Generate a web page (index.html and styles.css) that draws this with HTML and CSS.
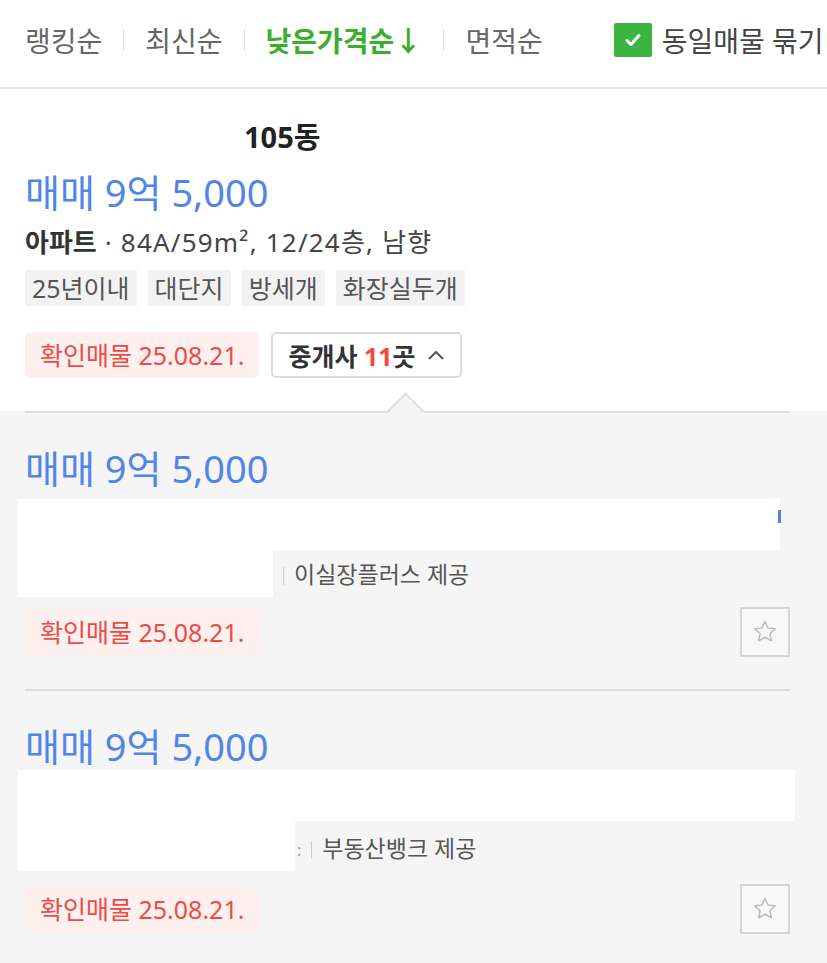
FILE: index.html
```html
<!DOCTYPE html>
<html lang="ko">

<head>
    <meta charset="UTF-8">
    <meta name="viewport" content="width=device-width, initial-scale=1.0">
    <title>매물 목록</title>

    <link rel="stylesheet" href="styles.css">
</head>

<body>
    <div class="sort-bar">
        <a href="#" class="sort-item">랭킹순</a>
        <span class="sep"></span>
        <a href="#" class="sort-item">최신순</a>
        <span class="sep"></span>
        <a href="#" class="sort-item active">낮은가격순↓</a>
        <span class="sep"></span>
        <a href="#" class="sort-item">면적순</a>
        <label class="group-check">
            <span class="checkbox">
                <svg width="22" height="22" viewBox="0 0 22 22">
                    <path d="M5 11.5l4 4 8-9" fill="none" stroke="#fff" stroke-width="3" stroke-linecap="round" stroke-linejoin="round"/>
                </svg>
            </span>
            동일매물 묶기
        </label>
    </div>

    <div class="card">
        <div class="building">105동</div>
        <div class="price">매매 9억 5,000</div>
        <div class="meta"><strong>아파트</strong> · 84A/59m², 12/24층, 남향</div>
        <div class="tags">
            <span class="tag">25년이내</span>
            <span class="tag">대단지</span>
            <span class="tag">방세개</span>
            <span class="tag">화장실두개</span>
        </div>
        <div class="actions">
            <span class="confirmed">확인매물 25.08.21.</span>
            <button class="broker-btn">
                <span>중개사 <em>11</em>곳</span>
                <svg width="18" height="12" viewBox="0 0 18 12">
                    <path d="M2 10l7-7 7 7" fill="none" stroke="#555" stroke-width="2"/>
                </svg>
            </button>
        </div>
    </div>

    <div class="brokers">
        <div class="broker">
            <div class="price">매매 9억 5,000</div>
            <div class="hidden-top"><span class="mark"></span></div>
            <div class="source-row">
                <div class="hidden-bottom"></div>
                <span class="bar"></span>
                <span class="source">이실장플러스 제공</span>
            </div>
            <div class="broker-foot">
                <span class="confirmed">확인매물 25.08.21.</span>
                <button class="star-btn">
                    <svg width="28" height="28" viewBox="0 0 24 24">
                        <path d="M12 3l2.6 5.6 6.1.7-4.5 4.2 1.2 6L12 16.5 6.6 19.5l1.2-6L3.3 9.3l6.1-.7z" fill="none" stroke="#bdbdbd" stroke-width="1.3" stroke-linejoin="round"/>
                    </svg>
                </button>
            </div>
        </div>

        <div class="broker second">
            <div class="price">매매 9억 5,000</div>
            <div class="hidden-top wide"></div>
            <div class="source-row">
                <div class="hidden-bottom wide"></div>
                <span class="colon">:</span>
                <span class="bar"></span>
                <span class="source">부동산뱅크 제공</span>
            </div>
            <div class="broker-foot">
                <span class="confirmed">확인매물 25.08.21.</span>
                <button class="star-btn">
                    <svg width="28" height="28" viewBox="0 0 24 24">
                        <path d="M12 3l2.6 5.6 6.1.7-4.5 4.2 1.2 6L12 16.5 6.6 19.5l1.2-6L3.3 9.3l6.1-.7z" fill="none" stroke="#bdbdbd" stroke-width="1.3" stroke-linejoin="round"/>
                    </svg>
                </button>
            </div>
        </div>
    </div>
</body>

</html>
```

FILE: styles.css
```css
* {
    box-sizing: border-box;
    padding: 0;
    margin: 0;
}

body {
    width: 827px;
    height: 963px;
    overflow: hidden;
    background-color: #f5f5f5;
    font-family: "Noto Sans", "Noto Sans CJK KR", sans-serif;
    color: #333;
}

a {
    text-decoration: none;
}

.sort-bar {
    display: flex;
    align-items: center;
    height: 89px;
    padding-left: 25px;
    padding-bottom: 8px;
    background-color: white;
    border-bottom: 2px solid #e6e6e6;
    white-space: nowrap;
}

.sort-item {
    font-size: 28px;
    color: #666;
}

.sort-item.active {
    color: #3aaf2e;
    font-weight: bold;
}

.sep {
    width: 1px;
    height: 20px;
    margin: 0 21px;
    background-color: #ddd;
}

.group-check {
    display: flex;
    align-items: center;
    gap: 10px;
    margin-left: 71px;
    font-size: 28px;
    color: #444;
}

.checkbox {
    display: flex;
    justify-content: center;
    align-items: center;
    width: 38px;
    height: 34px;
    border-radius: 2px;
    background-color: #3db543;
}

.card {
    padding: 28px 25px 33px;
    background-color: white;
}

.building {
    padding-left: 219px;
    font-size: 29px;
    font-weight: bold;
    line-height: 40px;
    color: #222;
}

.price {
    margin-top: 13px;
    font-size: 38px;
    line-height: 44px;
    color: #5285e8;
}

.meta {
    margin-top: 11px;
    font-size: 26px;
    line-height: 34px;
    color: #444;
    letter-spacing: 1.2px;
}

.meta strong {
    color: #333;
    letter-spacing: 0;
}

.tags {
    display: flex;
    gap: 11px;
    margin-top: 11px;
}

.tag {
    padding: 0 7px;
    background-color: #f2f2f2;
    font-size: 25px;
    line-height: 36px;
    color: #555;
}

.actions {
    display: flex;
    gap: 12px;
    margin-top: 26px;
}

.confirmed {
    display: inline-block;
    padding: 0 15px;
    border-radius: 6px;
    background-color: #fff0f0;
    font-size: 25px;
    line-height: 46px;
    color: #ef4a45;
}

.broker-btn {
    display: flex;
    align-items: center;
    gap: 11px;
    height: 46px;
    padding: 0 15px;
    border: 2px solid #ddd;
    border-radius: 5px;
    background-color: white;
    font-family: inherit;
    font-size: 25px;
    font-weight: bold;
    color: #333;
}

.broker-btn em {
    font-style: normal;
    color: #ef4a45;
}

.brokers {
    position: relative;
    padding: 0 37px 0 25px;
}

.brokers::before {
    content: "";
    position: absolute;
    top: -13px;
    left: 392px;
    width: 25px;
    height: 25px;
    background-color: #f5f5f5;
    border-top: 2px solid #ddd;
    border-left: 2px solid #ddd;
    transform: rotate(45deg);
}

.broker {
    padding-top: 35px;
    border-top: 2px solid #ddd;
}

.broker .price {
    margin-top: 0;
    line-height: 40px;
}

.hidden-top {
    position: relative;
    width: 762px;
    height: 51px;
    margin-top: 11px;
    margin-left: -7px;
    background-color: white;
}

.hidden-top.wide {
    width: 777px;
    margin-top: 4px;
}

.mark {
    position: absolute;
    right: -1px;
    top: 11px;
    width: 3px;
    height: 13px;
    background-color: #4f82e6;
}

.source-row {
    display: flex;
    align-items: flex-end;
    height: 47px;
}

.hidden-bottom {
    width: 255px;
    height: 47px;
    margin-left: -7px;
    background-color: white;
}

.hidden-bottom.wide {
    width: 277px;
    height: 50px;
}

.colon {
    margin-left: 2px;
    padding-bottom: 10px;
    font-size: 16px;
    color: #999;
}

.bar {
    width: 1px;
    height: 18px;
    margin: 0 10px 12px 10px;
    background-color: #ccc;
}

.source {
    padding-bottom: 8px;
    font-size: 23px;
    line-height: 30px;
    color: #555;
}

.second .source-row {
    height: 50px;
}

.broker-foot {
    display: flex;
    justify-content: space-between;
    align-items: center;
    padding: 10px 0 32px;
}

.second .broker-foot {
    padding-top: 13px;
}

.star-btn {
    display: flex;
    justify-content: center;
    align-items: center;
    width: 50px;
    height: 50px;
    border: 2px solid #d5d5d5;
    background-color: #f8f8f8;
}
```
